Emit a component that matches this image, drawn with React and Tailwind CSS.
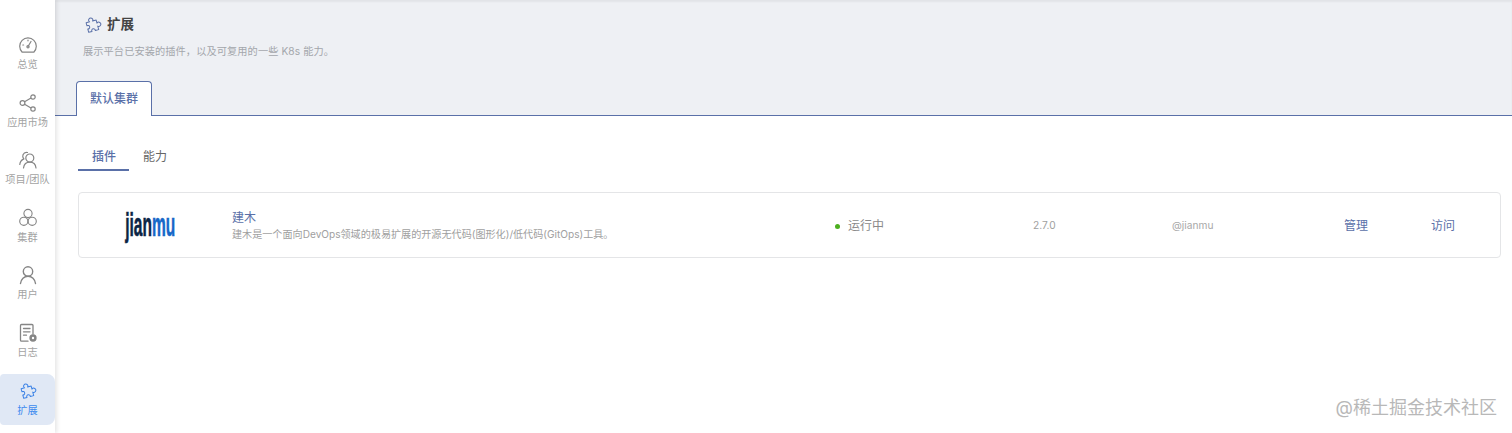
import React from 'react';

const FONT = "font-['Inter','Noto_Sans_CJK_SC',sans-serif]";

const GaugeIcon = () => (
    <svg width="20" height="20" viewBox="0 0 20 20" fill="none" stroke="currentColor" strokeWidth="1.2" strokeLinecap="round" strokeLinejoin="round">
        <path d="M4.2 17.2A8.3 8.3 0 1 1 15.8 17.2Z" />
        <path d="M10 11.5 13 6.5" />
        <circle cx="10" cy="11.8" r="1.1" />
        <path d="M4.8 10h.8M10 5v.8" />
    </svg>
);

const ShareIcon = () => (
    <svg width="20" height="20" viewBox="0 0 20 20" fill="none" stroke="currentColor" strokeWidth="1.2">
        <circle cx="4.5" cy="10" r="2.4" />
        <circle cx="15" cy="4" r="2.2" />
        <circle cx="15" cy="16" r="2.2" />
        <path d="M6.6 8.8 13 5.1M6.6 11.2 13 14.9" />
    </svg>
);

const TeamIcon = () => (
    <svg width="20" height="20" viewBox="0 0 20 20" fill="none" stroke="currentColor" strokeWidth="1.2" strokeLinecap="round">
        <circle cx="11.8" cy="8" r="4" />
        <path d="M5.5 18c.5-3.5 3-5.800 6.300-5.800S17.600 14.500 18 18" />
        <path d="M9.5 2.500A4 4 0 0 0 5 4.700c-.6 1.500-.2 3 .8 4.200C3.500 10 2 12 1.800 14.500" />
    </svg>
);

const ClusterIcon = () => (
    <svg width="20" height="20" viewBox="0 0 20 20" fill="none" stroke="currentColor" strokeWidth="1.1">
        <circle cx="10" cy="5.5" r="4.1" />
        <circle cx="5.8" cy="13.3" r="4.1" />
        <circle cx="14.2" cy="13.3" r="4.1" />
    </svg>
);

const UserIcon = () => (
    <svg width="20" height="20" viewBox="0 0 20 20" fill="none" stroke="currentColor" strokeWidth="1.4" strokeLinecap="round">
        <circle cx="10" cy="6.5" r="4.7" />
        <path d="M2.5 18.500c.5-4.200 3.600-7.300 7.500-7.300s7 3.100 7.500 7.300" />
    </svg>
);

const LogIcon = () => (
    <svg width="20" height="20" viewBox="0 0 20 20" fill="none" stroke="currentColor" strokeWidth="1.3" strokeLinecap="round">
        <path d="M10 18.200H3.500a1 1 0 0 1-1-1V2.500a1 1 0 0 1 1-1h10.500a1 1 0 0 1 1 1V11" />
        <path d="M5.5 5.500h6.500M5.500 8.800h6.500M5.500 12.200h3" />
        <circle cx="15" cy="15" r="3" fill="currentColor" />
        <circle cx="15" cy="15" r="1.2" fill="#ffffff" stroke="none" />
    </svg>
);

const PuzzleIcon = ({ size = 18, strokeWidth = 1.1 }) => (
    <svg width={size} height={size} viewBox="0 0 20 20" fill="none" stroke="currentColor" strokeWidth={strokeWidth} strokeLinejoin="round">
        <path
            transform="rotate(-15 10 10) translate(-1 1.2)"
            d="M4 5.500H8A2.300 2.300 0 1 1 11.400 5.500H15.500V9A2.300 2.300 0 1 1 15.500 12.400V16.500H11.600A2 2 0 1 0 7.800 16.500H4V12.700A2 2 0 1 0 4 8.900Z"
        />
    </svg>
);

const navItems = [
    { label: '总览', icon: <GaugeIcon /> },
    { label: '应用市场', icon: <ShareIcon /> },
    { label: '项目/团队', icon: <TeamIcon /> },
    { label: '集群', icon: <ClusterIcon /> },
    { label: '用户', icon: <UserIcon /> },
    { label: '日志', icon: <LogIcon /> },
];

const App = () => {
    return (
        <div className={`relative flex h-[433px] w-[1512px] overflow-hidden bg-white ${FONT}`}>
            <aside className="z-10 flex w-[55px] shrink-0 flex-col items-center bg-white pt-[35px] shadow-[2px_0_4px_rgba(0,0,0,0.1)]">
                {navItems.map((item) => (
                    <div key={item.label} className="flex h-[57.5px] w-full flex-col items-center text-[#858585]">
                        {item.icon}
                        <span className="mt-[2px] whitespace-nowrap text-[10.2px] leading-[14px] text-[#a3a3a3]">{item.label}</span>
                    </div>
                ))}
                <div className="-mt-[6px] flex h-[51px] w-full flex-col items-center rounded-r-lg rounded-l-sm bg-[#e0e8f5] pt-[7px] text-[#3b82e6]">
                    <PuzzleIcon />
                    <span className="mt-[4px] text-[10.2px] leading-[14px] text-[#3d8bef]">扩展</span>
                </div>
            </aside>

            <main className="flex min-w-0 flex-1 flex-col">
                <header className="h-[116px] shrink-0 border-b border-[#5a70a8] bg-[#eef0f4] pt-[15px] shadow-[inset_0_2px_2px_rgba(0,0,0,0.05)]">
                    <div className="flex items-center pl-[29px] text-[#5a70a8]">
                        <PuzzleIcon size={18} />
                        <h1 className="ml-[5px] text-[13.5px] font-semibold leading-[18px] text-[#444444]">扩展</h1>
                    </div>
                    <p className="ml-[28px] mt-[11px] text-[10.2px] leading-[14px] tracking-[0.1px] text-[#a3a6ab]">展示平台已安装的插件，以及可复用的一些 K8s 能力。</p>
                    <div className="ml-[21px] mt-[23px] flex h-[35px] w-[76px] items-center justify-center rounded-t border border-b-0 border-[#5a70a8] bg-white text-[12px] font-medium text-[#5a70a8]">默认集群</div>
                </header>

                <section className="flex-1 pl-[23px] pr-[11px] pt-[31px]">
                    <div className="flex h-[24px] items-start text-[12px] leading-[20px]">
                        <div className="h-[24px] w-[51px] border-b-2 border-[#5a70a8] pl-[1px] text-center font-medium text-[#5a70a8]">插件</div>
                        <div className="ml-[14px] text-[#666666]">能力</div>
                    </div>

                    <div className="mt-[21px] flex h-[66px] items-center rounded border border-[#e4e5e7] bg-white">
                        <div className="flex w-[153px] shrink-0 justify-center pr-[10px]">
                            <div className="flex h-[36px] origin-center scale-x-[0.47] items-center whitespace-nowrap font-['Liberation_Sans',sans-serif] text-[33px] font-bold [-webkit-text-stroke:0.6px]">
                                <span className="text-[#0b2545]">jian</span>
                                <span className="text-[#1668c8]">mu</span>
                            </div>
                        </div>
                        <div className="w-[603px] shrink-0">
                            <div className="mb-[1px] text-[12px] leading-[17px] text-[#5a70a8]">建木</div>
                            <div className="text-[10.1px] leading-[14px] text-[#a0a0a0]">建木是一个面向DevOps领域的极易扩展的开源无代码(图形化)/低代码(GitOps)工具。</div>
                        </div>
                        <div className="mt-[2px] flex w-[198px] shrink-0 items-center text-[12px] text-[#8a8a8a]">
                            <span className="h-[5px] w-[5px] rounded-full bg-[#4caf1f]" />
                            <span className="ml-[8px]">运行中</span>
                        </div>
                        <div className="mt-[1px] w-[139px] shrink-0 text-[10.2px] text-[#a0a0a0]">2.7.0</div>
                        <div className="mt-[1px] w-[172px] shrink-0 text-[10.2px] text-[#a8a8a8]">@jianmu</div>
                        <div className="mt-[2px] w-[87px] shrink-0 text-[12px] text-[#5a70a8]">管理</div>
                        <div className="mt-[2px] text-[12px] text-[#5a70a8]">访问</div>
                    </div>
                </section>
            </main>

            <div className="absolute bottom-[13px] right-[15px] text-[18px] leading-[24px] text-[#b8b8b8]">@稀土掘金技术社区</div>
        </div>
    );
};

export default App;
